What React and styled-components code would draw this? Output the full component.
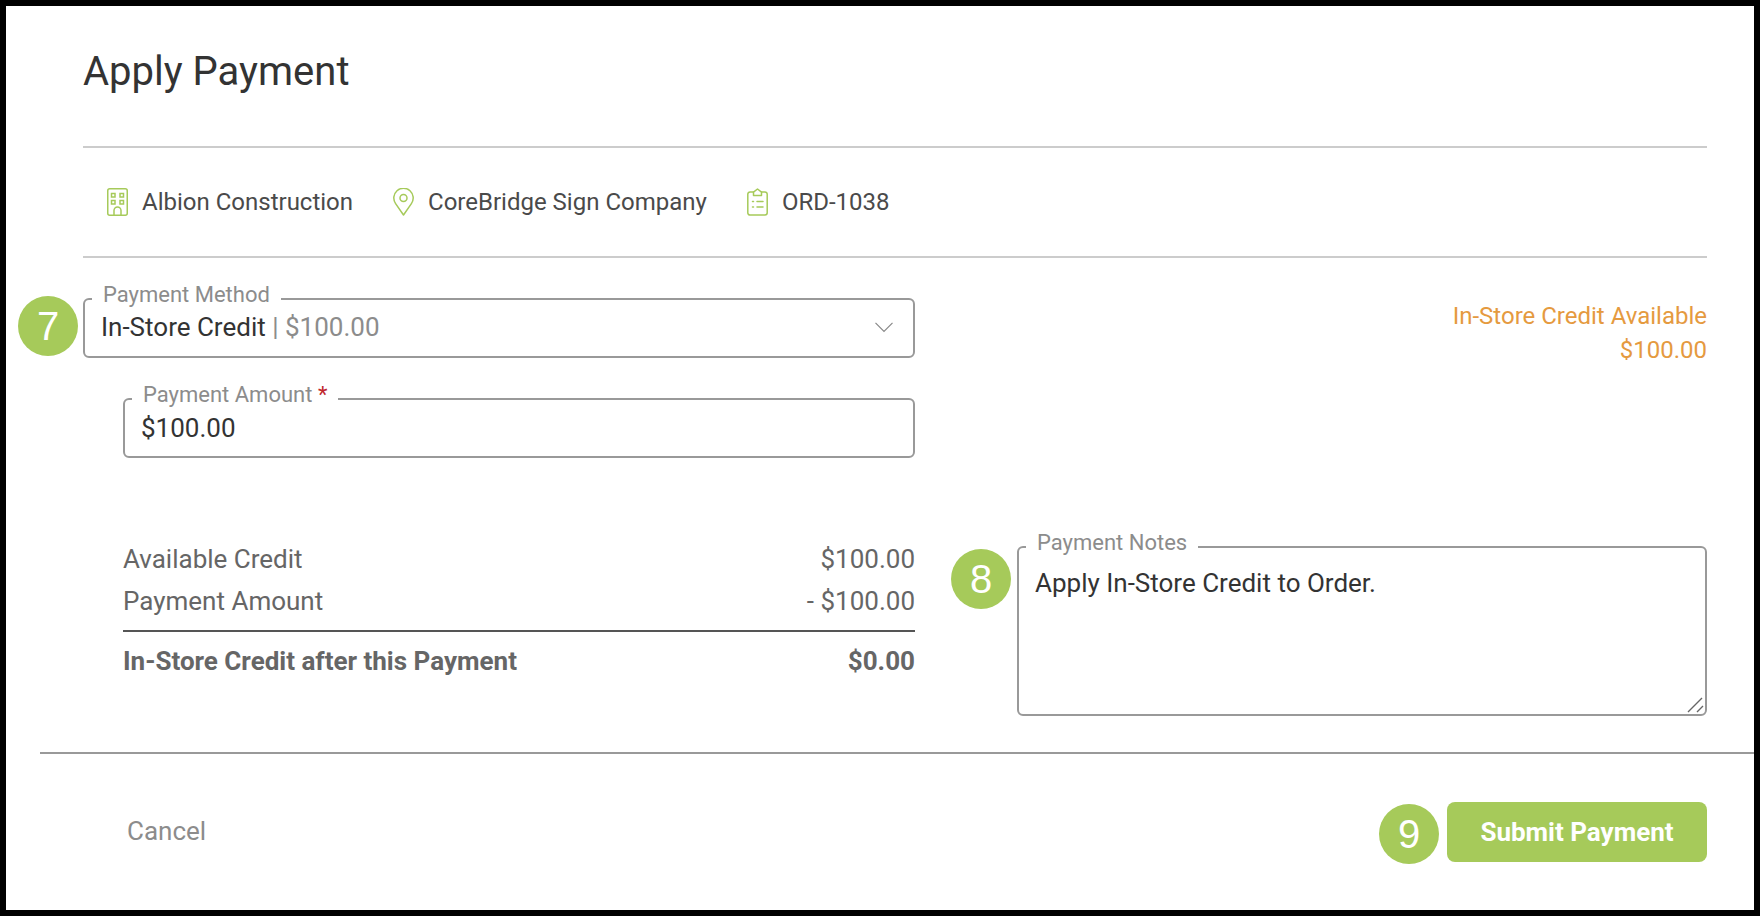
import React from 'react';
import styled, { createGlobalStyle } from 'styled-components';

const GlobalStyle = createGlobalStyle`
  html, body {
    margin: 0;
    padding: 0;
    background: #fff;
    font-family: Roboto, "Liberation Sans", sans-serif;
  }
`;

const Frame = styled.div`
  box-sizing: border-box;
  width: 1760px;
  height: 916px;
  border: 6px solid #000;
  background: #fff;
  overflow: hidden;
`;

const Header = styled.header`
  padding: 0 47px 0 77px;
`;

const Title = styled.h1`
  margin: 0;
  height: 142px;
  padding-top: 41px;
  box-sizing: border-box;
  font-size: 40px;
  line-height: 50px;
  font-weight: 400;
  color: #333;
  border-bottom: 2px solid #ccc;
`;

const InfoBar = styled.div`
  display: flex;
  align-items: center;
  gap: 40px;
  height: 108px;
  padding-left: 24px;
  border-bottom: 2px solid #ccc;
`;

const InfoItem = styled.div`
  display: flex;
  align-items: center;
  gap: 14px;
  font-size: 24px;
  color: #4a4a4a;
`;

const Content = styled.div`
  display: grid;
  grid-template-columns: 832px 690px;
  column-gap: 102px;
  grid-template-rows: 274px auto;
  padding: 0 47px 0 77px;
`;

const LeftTop = styled.div`
  display: flex;
  flex-direction: column;
  gap: 26px;
  padding-top: 26px;
`;

const Field = styled.fieldset`
  position: relative;
  box-sizing: border-box;
  margin: ${(p) => (p.$indent ? '0 0 0 40px' : '0')};
  padding: 0 16px;
  height: ${(p) => p.$height || 74}px;
  border: 2px solid #999;
  border-radius: 6px;
  min-width: 0;
`;

// the bottom padding lifts the label above the border line
const Legend = styled.legend`
  margin-left: -9px;
  padding: 0 11px 8px;
  font-size: 22px;
  line-height: 22px;
  color: #8c8c8c;
`;

const Star = styled.span`
  color: #c0272d;
`;

const SelectValue = styled.div`
  display: flex;
  align-items: center;
  justify-content: space-between;
  height: 46px;
  margin-top: -10px;
  padding-right: 4px;
  font-size: 26px;
  color: #333;
`;

const Muted = styled.span`
  color: #8c8c8c;
`;

const Input = styled.input`
  display: block;
  box-sizing: border-box;
  width: 100%;
  height: 46px;
  margin-top: -9px;
  padding: 0;
  border: 0;
  outline: 0;
  background: transparent;
  font: 400 26px Roboto, sans-serif;
  color: #333;
`;

const Notes = styled.textarea`
  display: block;
  box-sizing: border-box;
  width: calc(100% + 16px);
  height: 162px;
  margin-top: -10px;
  padding: 15px 16px 0 0;
  border: 0;
  outline: 0;
  resize: none;
  background: transparent;
  font: 400 26px/32px Roboto, sans-serif;
  color: #333;
`;

const Grip = styled.svg`
  position: absolute;
  right: 1px;
  bottom: 1px;
  pointer-events: none;
`;

const CreditNote = styled.div`
  padding-top: 41px;
  text-align: right;
  font-size: 24px;
  line-height: 34px;
  color: #e59a3f;
`;

const Summary = styled.div`
  margin-left: 40px;
  padding-top: 6px;
  font-size: 26px;
  color: #666;
`;

const SummaryRow = styled.div`
  display: flex;
  justify-content: space-between;
  align-items: center;
  height: 42px;
`;

const SummaryTotal = styled(SummaryRow)`
  margin-top: 8px;
  height: 58px;
  border-top: 2px solid #555;
  font-weight: 700;
`;

const Badge = styled.span`
  position: absolute;
  top: ${(p) => p.$top}px;
  left: ${(p) => p.$left}px;
  width: 60px;
  height: 60px;
  border-radius: 50%;
  display: flex;
  align-items: center;
  justify-content: center;
  background: #a6ca5a;
  color: #fff;
  font-family: "Liberation Sans", Arial, sans-serif;
  font-size: 40px;
  font-weight: 400;
  line-height: 1;
`;

const Footer = styled.footer`
  display: flex;
  align-items: center;
  justify-content: space-between;
  margin: 36px 0 0 34px;
  padding: 0 47px 0 87px;
  height: 158px;
  box-sizing: border-box;
  border-top: 2px solid #999;
`;

const Cancel = styled.button`
  padding: 0 0 2px;
  border: 0;
  background: none;
  font: 400 26px Roboto, sans-serif;
  color: #8c8c8c;
`;

const SubmitWrap = styled.div`
  position: relative;
`;

const Submit = styled.button`
  display: block;
  width: 260px;
  height: 60px;
  border: 0;
  border-radius: 8px;
  background: #a6ca5a;
  color: #fff;
  font: 700 26px Roboto, sans-serif;
`;

const BuildingIcon = () => (
  <svg width="21" height="28" viewBox="0 0 21 28" fill="none" stroke="#a6ca5a" strokeWidth="1.5">
    <rect x="0.75" y="0.75" width="19.5" height="26.5" rx="2" />
    <rect x="4.5" y="5.5" width="3.5" height="3.5" />
    <rect x="13" y="5.5" width="3.5" height="3.5" />
    <rect x="4.5" y="12.5" width="3.5" height="3.5" />
    <rect x="13" y="12.5" width="3.5" height="3.5" />
    <path d="M7 27v-4.5a3.5 3.5 0 0 1 7 0V27" />
  </svg>
);

const PinIcon = () => (
  <svg width="21" height="28" viewBox="0 0 21 28" fill="none" stroke="#a6ca5a" strokeWidth="1.5">
    <path d="M10.5 27 L2.6 15.6 A9.7 9.7 0 1 1 18.4 15.6 Z" strokeLinejoin="round" />
    <circle cx="10.5" cy="10" r="3.5" />
  </svg>
);

const ClipboardIcon = () => (
  <svg width="21" height="28" viewBox="0 0 21 28" fill="none" stroke="#a6ca5a" strokeWidth="1.5" strokeLinecap="round">
    <path d="M6.5 4H3a2.2 2.2 0 0 0-2.2 2.2v18.6A2.2 2.2 0 0 0 3 27h15a2.2 2.2 0 0 0 2.2-2.2V6.2A2.2 2.2 0 0 0 18 4h-3.5" />
    <path d="M6.5 7.5V4.2L10.5 1l4 3.2v3.3z" strokeLinejoin="round" />
    <path d="M5.5 13.5h1M10 13.5h6M5.5 19h1M10 19h6" />
  </svg>
);

const Chevron = () => (
  <svg width="18" height="11" viewBox="0 0 18 11" fill="none" stroke="#888" strokeWidth="1.2">
    <path d="M0.5 0.8 L9 9.5 L17.5 0.8" />
  </svg>
);

const App = () => {
  return (
    <>
      <GlobalStyle />
      <Frame>
        <Header>
          <Title>Apply Payment</Title>
          <InfoBar>
            <InfoItem><BuildingIcon />Albion Construction</InfoItem>
            <InfoItem><PinIcon />CoreBridge Sign Company</InfoItem>
            <InfoItem><ClipboardIcon />ORD-1038</InfoItem>
          </InfoBar>
        </Header>

        <Content>
          <LeftTop>
            <Field>
              <Legend>Payment Method</Legend>
              <Badge $top={-18} $left={-67}>7</Badge>
              <SelectValue>
                <span>In-Store Credit <Muted>| $100.00</Muted></span>
                <Chevron />
              </SelectValue>
            </Field>
            <Field $indent>
              <Legend>Payment Amount <Star>*</Star></Legend>
              <Input readOnly defaultValue="$100.00" />
            </Field>
          </LeftTop>

          <CreditNote>
            In-Store Credit Available
            <br />
            $100.00
          </CreditNote>

          <Summary>
            <SummaryRow><span>Available Credit</span><span>$100.00</span></SummaryRow>
            <SummaryRow><span>Payment Amount</span><span>- $100.00</span></SummaryRow>
            <SummaryTotal><span>In-Store Credit after this Payment</span><span>$0.00</span></SummaryTotal>
          </Summary>

          <Field $height={184}>
            <Legend>Payment Notes</Legend>
            <Badge $top={-13} $left={-68}>8</Badge>
            <Notes readOnly defaultValue="Apply In-Store Credit to Order." />
            <Grip width="17" height="16" viewBox="0 0 17 16" fill="none" stroke="#666" strokeWidth="1.4">
              <path d="M1 15 L15 1 M10 15 L16 9" />
            </Grip>
          </Field>
        </Content>

        <Footer>
          <Cancel>Cancel</Cancel>
          <SubmitWrap>
            <Badge $top={2} $left={-68}>9</Badge>
            <Submit>Submit Payment</Submit>
          </SubmitWrap>
        </Footer>
      </Frame>
    </>
  );
};

export default App;
